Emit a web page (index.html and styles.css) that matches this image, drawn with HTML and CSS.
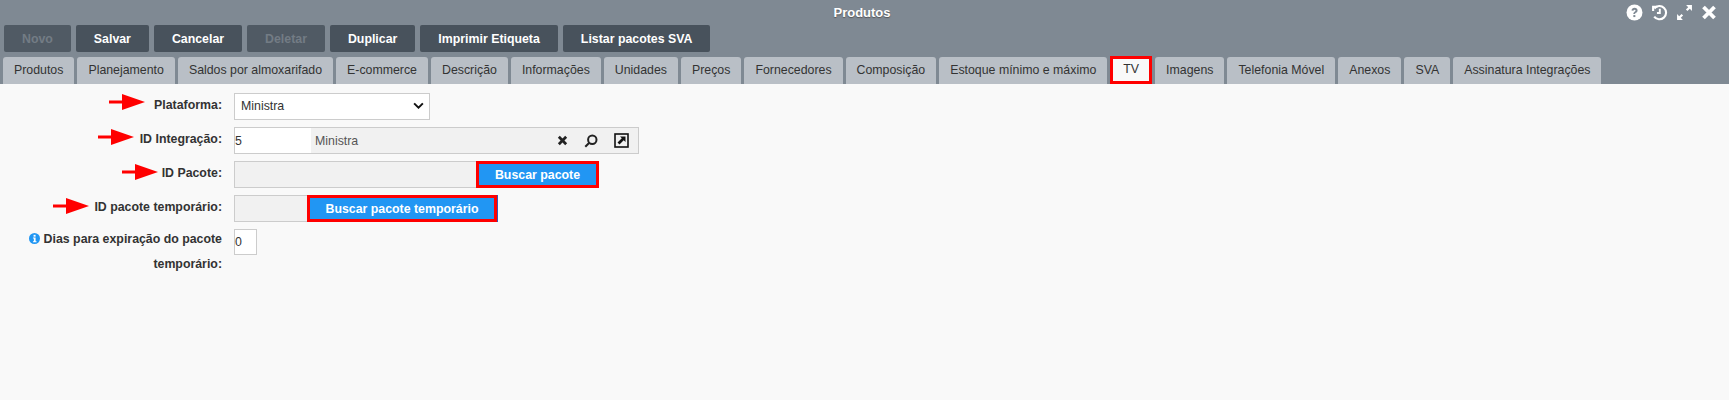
FILE: index.html
```html
<!DOCTYPE html>
<html lang="en">

<head>
    <meta charset="UTF-8">
    <meta name="viewport" content="width=device-width, initial-scale=1.0">
    <title>Produtos</title>
    <link rel="stylesheet" href="styles.css">
</head>

<body>
    <div class="window">
        <div class="top">
            <div class="title-bar">
                <span class="title">Produtos</span>
                <div class="win-icons">
                    <svg viewBox="0 0 16 16" width="17" height="17">
                        <circle cx="8" cy="8" r="7.5" fill="#fff" />
                        <path d="M5.2 6.2C5.3 4.6 6.5 3.6 8.1 3.6c1.6 0 2.8 1 2.8 2.4 0 1.2-.7 1.8-1.5 2.3-.6.4-.8.6-.8 1.2H6.9c0-1.2.4-1.8 1.2-2.3.6-.4.9-.7.9-1.1 0-.5-.4-.8-.9-.8-.6 0-1 .4-1.1 1z" fill="#7f8993" />
                        <rect x="6.9" y="10.4" width="1.9" height="1.9" fill="#7f8993" />
                    </svg>
                    <svg viewBox="0 0 16 16" width="17" height="17" fill="none" stroke="#fff" stroke-width="2">
                        <path d="M3.2 4.2A6.2 6.2 0 1 1 3 11.8" />
                        <path d="M1 1.600h5.200v1.900H3v3H1z" fill="#fff" stroke="none" />
                        <path d="M8.300 4.400v4H5.600" stroke-width="1.800" />
                    </svg>
                    <svg viewBox="0 0 16 16" width="17" height="17" fill="#fff">
                        <path d="M9.500 1H15v5.500l-2-2-2.200 2.200-1.500-1.500L11.500 3z" />
                        <path d="M1 9.500V15h5.500l-2-2 2.200-2.200-1.500-1.500L3 11.500z" />
                    </svg>
                    <svg viewBox="0 0 16 16" width="16" height="17" fill="none" stroke="#fff" stroke-width="3.800">
                        <path d="M2.500 2.500l11 11M13.500 2.500l-11 11" />
                    </svg>
                </div>
            </div>
            <div class="toolbar">
                <button class="tool-btn disabled">Novo</button>
                <button class="tool-btn">Salvar</button>
                <button class="tool-btn">Cancelar</button>
                <button class="tool-btn disabled">Deletar</button>
                <button class="tool-btn">Duplicar</button>
                <button class="tool-btn">Imprimir Etiqueta</button>
                <button class="tool-btn">Listar pacotes SVA</button>
            </div>
            <ul class="tabs">
                <li>Produtos</li>
                <li>Planejamento</li>
                <li>Saldos por almoxarifado</li>
                <li>E-commerce</li>
                <li>Descrição</li>
                <li>Informações</li>
                <li>Unidades</li>
                <li>Preços</li>
                <li>Fornecedores</li>
                <li>Composição</li>
                <li>Estoque mínimo e máximo</li>
                <li class="active">TV</li>
                <li>Imagens</li>
                <li>Telefonia Móvel</li>
                <li>Anexos</li>
                <li>SVA</li>
                <li>Assinatura Integrações</li>
            </ul>
        </div>

        <div class="content">
            <div class="row">
                <svg class="arrow arrow-plat" viewBox="0 0 36 16"><path d="M0 6.500h13V0l23 8-23 8V9.500H0z" fill="#f00" /></svg>
                <label class="lbl">Plataforma:</label>
                <div class="select-box">
                    <span>Ministra</span>
                    <svg viewBox="0 0 12 8" width="11" height="7" fill="none" stroke="#111" stroke-width="2.200">
                        <path d="M1 1.500l5 5 5-5" />
                    </svg>
                </div>
            </div>

            <div class="row">
                <svg class="arrow arrow-integ" viewBox="0 0 36 16"><path d="M0 6.500h13V0l23 8-23 8V9.500H0z" fill="#f00" /></svg>
                <label class="lbl">ID Integração:</label>
                <div class="lookup">
                    <div class="lookup-id">5</div>
                    <div class="lookup-name">Ministra</div>
                    <div class="lookup-icons">
                        <svg viewBox="0 0 12 12" width="11" height="11" fill="none" stroke="#222" stroke-width="3">
                            <path d="M2 2l8 8M10 2l-8 8" />
                        </svg>
                        <svg viewBox="0 0 14 14" width="14" height="14" fill="none" stroke="#222" stroke-width="2">
                            <circle cx="8.300" cy="5.700" r="4.200" />
                            <path d="M5.300 8.700L1.300 12.700" />
                        </svg>
                        <svg viewBox="0 0 15 15" width="15" height="15">
                            <rect x="1" y="1" width="13" height="13" fill="none" stroke="#111" stroke-width="1.600" />
                            <path d="M6 3.500h5.500V9L9.700 7.200 5.500 11.500 3.500 9.500l4.300-4.200z" fill="#111" />
                        </svg>
                    </div>
                </div>
            </div>

            <div class="row">
                <svg class="arrow arrow-pacote" viewBox="0 0 36 16"><path d="M0 6.500h13V0l23 8-23 8V9.500H0z" fill="#f00" /></svg>
                <label class="lbl">ID Pacote:</label>
                <div class="readonly wide"></div>
                <button class="search-btn pacote">Buscar pacote</button>
            </div>

            <div class="row">
                <svg class="arrow arrow-temp" viewBox="0 0 36 16"><path d="M0 6.500h13V0l23 8-23 8V9.500H0z" fill="#f00" /></svg>
                <label class="lbl">ID pacote temporário:</label>
                <div class="readonly narrow"></div>
                <button class="search-btn temp">Buscar pacote temporário</button>
            </div>

            <div class="row tall">
                <label class="lbl">
                    <svg class="info" viewBox="0 0 12 12" width="11" height="11">
                        <circle cx="6" cy="6" r="6" fill="#2196f3" />
                        <rect x="5" y="2" width="2.200" height="2" fill="#fff" />
                        <path d="M4.300 5h2.900v4h1v1H4.300V9h1V6h-1z" fill="#fff" />
                    </svg>
                    Dias para expiração do pacote temporário:
                </label>
                <div class="small-input">0</div>
            </div>
        </div>
    </div>
</body>

</html>
```

FILE: styles.css
```css
* {
    margin: 0;
    padding: 0;
    box-sizing: border-box;
}

li {
    list-style: none;
}

html,
body {
    height: 100%;
}

body {
    font-family: "Liberation Sans", Arial, sans-serif;
    font-size: 12.35px;
    color: #333;
    background-color: #f9f9f9;
}

.window {
    height: 100%;
    overflow: hidden;
}

.top {
    height: 84px;
    background-color: #7f8993;
}

.title-bar {
    height: 25px;
    padding-right: 5px;
    position: relative;
    display: flex;
    justify-content: center;
    align-items: center;
}

.title {
    color: #fff;
    font-size: 13px;
    font-weight: bold;
    text-shadow: 0 1px 1px #555;
}

.win-icons {
    position: absolute;
    top: 4px;
    right: 12px;
    display: flex;
    gap: 8px;
}

.toolbar {
    display: flex;
    gap: 5px;
    padding-left: 4px;
    height: 27px;
}

.tool-btn {
    height: 27px;
    padding: 0 18px;
    border: 0;
    border-radius: 2px;
    background-color: #48525c;
    color: #fff;
    font-family: inherit;
    font-size: 12.35px;
    font-weight: bold;
}

.tool-btn.disabled {
    color: #737c85;
    background-color: #505a64;
    padding: 0 18px;
}

.tabs {
    display: flex;
    gap: 3px;
    padding: 5px 0 0 3px;
}

.tabs li {
    height: 27px;
    line-height: 26px;
    padding: 0 11px;
    background-color: #b9bfc6;
    border-radius: 3px 3px 0 0;
    color: #333;
}

.tabs .active {
    background-color: #f9f9f9;
    border: 3px solid #f00;
    line-height: 21px;
    padding: 0 10px;
    border-radius: 0;
    height: 28px;
    margin-top: -1px;
    position: relative;
}

.content {
    padding-top: 9px;
}

.row {
    position: relative;
    display: flex;
    align-items: center;
    height: 27px;
    margin-bottom: 7px;
}

.row.tall {
    align-items: flex-start;
}

.lbl {
    width: 224px;
    padding: 0 2px 3px 0;
    text-align: right;
    font-weight: bold;
    margin-right: 10px;
    flex-shrink: 0;
}

.tall .lbl {
    line-height: 25px;
    padding-left: 10px;
    margin-top: -2px;
}

.info {
    vertical-align: -1px;
}

.arrow {
    position: absolute;
    width: 36px;
    height: 16px;
}

.arrow-plat {
    left: 109px;
    top: 1px;
}

.arrow-integ {
    left: 98px;
    top: 2px;
}

.arrow-pacote {
    left: 122px;
    top: 3px;
}

.arrow-temp {
    left: 53px;
    top: 3px;
}

.select-box {
    width: 196px;
    height: 27px;
    padding: 0 5px 2px 6px;
    display: flex;
    justify-content: space-between;
    align-items: center;
    background-color: #fff;
    border: 1px solid #ccc;
}

.lookup {
    width: 405px;
    height: 27px;
    display: flex;
    background-color: #f1f1f1;
    border: 1px solid #ccc;
}

.lookup-id {
    width: 76px;
    background-color: #fff;
    line-height: 26px;
}

.lookup-name {
    flex: 1;
    padding-left: 4px;
    line-height: 26px;
    color: #555;
}

.lookup-icons {
    display: flex;
    align-items: center;
    gap: 16px;
    padding-right: 9px;
}

.readonly {
    height: 27px;
    background-color: #f1f1f1;
    border: 1px solid #ccc;
    border-right: 0;
}

.readonly.wide {
    width: 242px;
}

.readonly.narrow {
    width: 73px;
}

.search-btn {
    height: 27px;
    border: 3px solid #f00;
    background-color: #2196f3;
    color: #fff;
    font-family: inherit;
    font-size: 12.35px;
    font-weight: bold;
}

.search-btn.pacote {
    width: 123px;
}

.search-btn.temp {
    width: 190px;
    box-shadow: 1px 0 0 #3f51b5;
}

.small-input {
    width: 23px;
    height: 26px;
    background-color: #fff;
    border: 1px solid #ccc;
    line-height: 25px;
}
```
